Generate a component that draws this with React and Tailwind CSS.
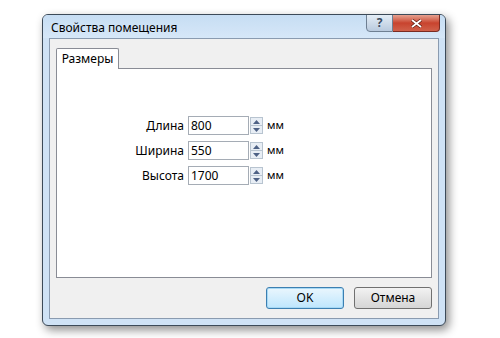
import React from 'react';

const font = { fontFamily: '"Segoe UI", "Noto Sans", "DejaVu Sans", sans-serif' };

// Spinner (up/down arrows) next to each edit box
const Spinner = () => (
  <div className="flex flex-col w-[13px] h-[17px] ml-[1px] border border-[#b8c4d0] bg-[#e8eef5]">
    <div className="flex-1 flex items-center justify-center border-b border-[#b8c4d0]">
      <svg width="7" height="4" viewBox="0 0 7 4"><path d="M0 4 L3.5 0 L7 4 Z" fill="#4d6185" /></svg>
    </div>
    <div className="flex-1 flex items-center justify-center">
      <svg width="7" height="4" viewBox="0 0 7 4"><path d="M0 0 L3.5 4 L7 0 Z" fill="#4d6185" /></svg>
    </div>
  </div>
);

const Row = ({ label, value }) => (
  <div className="flex items-center h-[19px]">
    <div className="w-[60px] text-right pr-[4px] text-[12px] text-black">{label}</div>
    <div className="w-[61px] h-[19px] border border-[#a5acb5] bg-white pl-[2px] text-[12px] leading-[17px] text-black">{value}</div>
    <Spinner />
    <div className="ml-[4px] text-[11px] text-black">мм</div>
  </div>
);

export default function App() {
  return (
    <div className="w-[500px] h-[338px] bg-white relative" style={font}>
      <div className="absolute left-[42px] top-[14px] w-[404px] h-[312px] rounded-[6px] border border-[#3c4a58] bg-[#cfe2f5] shadow-[3px_4px_10px_rgba(0,0,0,0.45)] flex flex-col overflow-hidden">
        {/* Title bar */}
        <div className="h-[23px] flex items-start bg-gradient-to-b from-[#c6ddf3] to-[#d6e7f8] relative">
          <div className="pl-[8px] pt-[5px] text-[12px] text-black leading-[15px]">Свойства помещения</div>
          <div className="absolute right-[5px] top-[-1px] flex">
            <div className="w-[27px] h-[18px] rounded-bl-[4px] border border-[#6e7f92] bg-gradient-to-b from-[#e4edf6] to-[#b9cade] flex items-center justify-center text-[12px] font-bold text-[#3b4b5e]">?</div>
            <div className="w-[47px] h-[18px] rounded-br-[4px] border border-l-0 border-[#7a2b22] bg-gradient-to-b from-[#e5a08f] via-[#c8432e] to-[#d0604a] flex items-center justify-center">
              <svg width="11" height="9" viewBox="0 0 11 9">
                <path d="M1 1 L10 8 M10 1 L1 8" stroke="#5a1a10" strokeWidth="3.2" />
                <path d="M1 1 L10 8 M10 1 L1 8" stroke="#fff" strokeWidth="1.8" />
              </svg>
            </div>
          </div>
        </div>
        {/* Client area */}
        <div className="flex-1 mx-[6px] mb-[6px] bg-[#f0f0f0] border border-[#8a9bb0] flex flex-col px-[6px] pt-[9px]">
          {/* Tab header */}
          <div className="flex h-[21px]">
            <div className="w-[63px] h-[21px] border border-b-0 border-[#898c95] bg-white rounded-t-[2px] flex items-center justify-center text-[12px] text-black relative z-10">Размеры</div>
          </div>
          {/* Tab panel */}
          <div className="h-[210px] -mt-px border border-[#898c95] bg-white flex flex-col items-start pl-[71px] pt-[47px] gap-[6px]">
            <Row label="Длина" value="800" />
            <Row label="Ширина" value="550" />
            <Row label="Высота" value="1700" />
          </div>
          {/* Buttons */}
          <div className="flex justify-end gap-[10px] mt-[9px]">
            <button className="w-[78px] h-[22px] rounded-[3px] border border-[#3c7fb1] bg-gradient-to-b from-[#eaf6fd] to-[#bee6fd] text-[12px] text-black shadow-[inset_0_0_0_1px_#a7d9f5]">OK</button>
            <button className="w-[78px] h-[22px] rounded-[3px] border border-[#707070] bg-gradient-to-b from-[#f2f2f2] to-[#d5d5d5] text-[12px] text-black">Отмена</button>
          </div>
        </div>
      </div>
    </div>
  );
}
